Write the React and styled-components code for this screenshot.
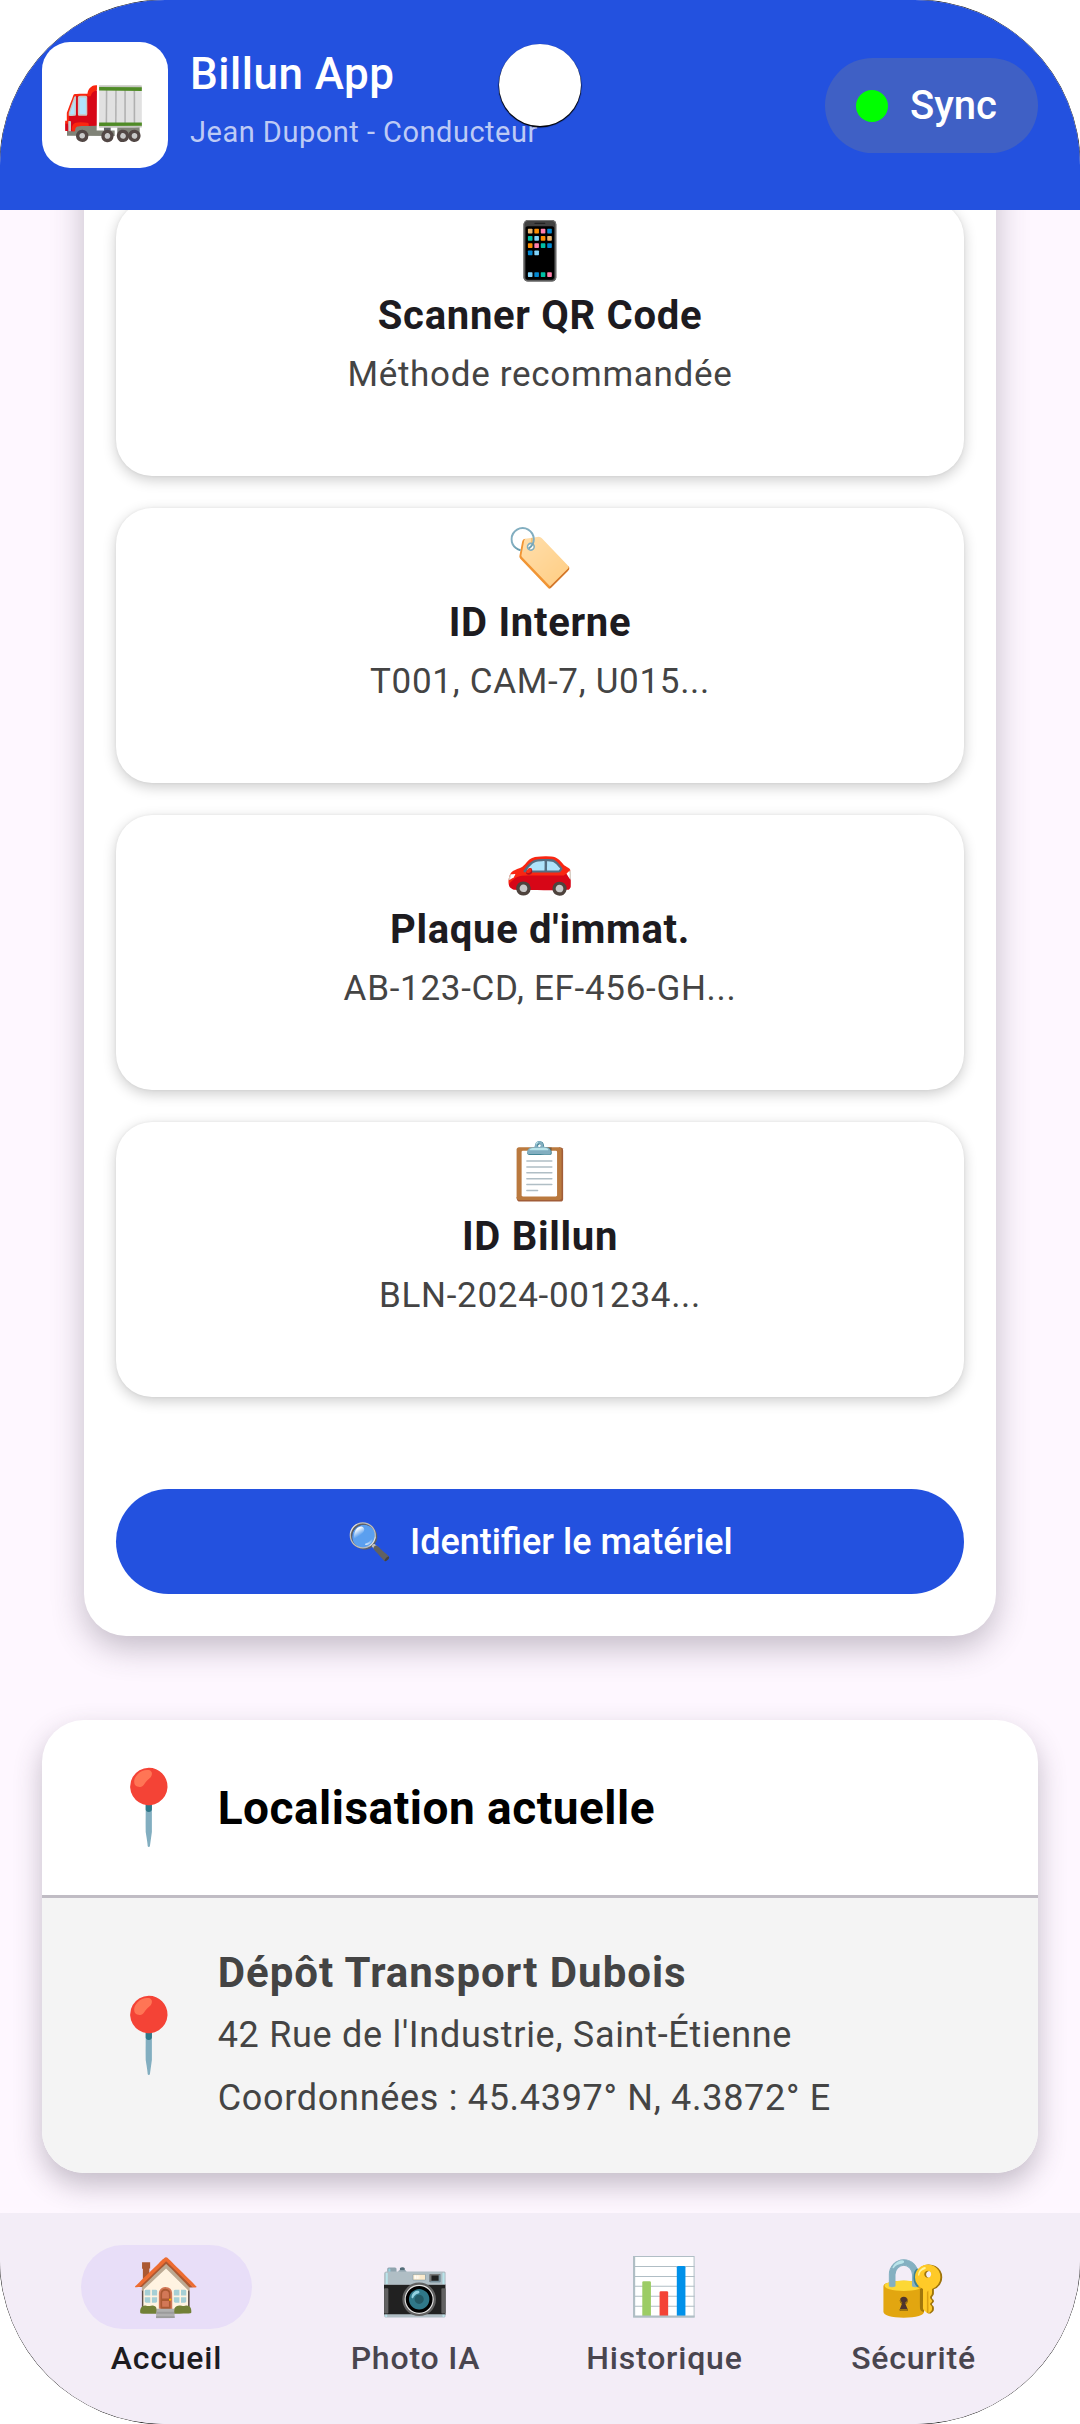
import React from "react";
import styled, { createGlobalStyle } from "styled-components";

const Global = createGlobalStyle`
  html, body { margin: 0; padding: 0; background: #fff; }
  * { box-sizing: border-box; }
  body { font-family: Roboto, "Noto Sans", sans-serif; }
`;
const Screen = styled.div`
  width: 1080px; height: 2424px; border-radius: 165px; overflow: hidden;
  background: #fef7ff; display: flex; flex-direction: column; position: relative;
  box-shadow: 0 0 0 0.5px #000;
`;
const Header = styled.header`
  height: 210px; flex: none; background: #2351df; display: flex; align-items: flex-start;
  padding: 42px 42px 0; position: relative; z-index: 2;
`;
const Logo = styled.div`
  width: 126px; height: 126px; border-radius: 28px; background: #fff; display: flex;
  align-items: center; justify-content: center; flex: none;
`;
const Emoji = styled.span`
  font-family: "Noto Color Emoji", sans-serif; font-size: ${p => p.$size}px; line-height: 1; display: block; flex: none;
`;
const HeaderText = styled.div`
  margin-left: 22px; display: flex; flex-direction: column; flex: 1;
`;
const AppTitle = styled.div`
  color: #fff; font-size: 44px; font-weight: 500; line-height: 60px; margin-top: 2px; letter-spacing: .5px;
`;
const AppSub = styled.div`
  color: #bdcaf5; font-size: 29px; line-height: 40px; margin-top: 8px; letter-spacing: .5px;
`;
const Sync = styled.div`
  width: 213px; height: 95px; border-radius: 48px; background: #3f60c5; display: flex; align-items: center;
  padding-left: 31px; gap: 22px; color: #fff; font-size: 40px; font-weight: 500; margin-top: 16px; flex: none;
`;
const Dot = styled.span`
  width: 32px; height: 32px; border-radius: 50%; background: #00ff00;
`;
const Cutout = styled.div`
  position: absolute; left: 499px; top: 44px; width: 82px; height: 82px; border-radius: 50%; background: #fff;
  box-shadow: 0 1px 1px 0.5px #000; z-index: 3;
`;
const Main = styled.main`
  flex: 1; min-height: 0; overflow: hidden;
`;
const Scroll = styled.div`
  margin-top: -300px; display: flex; flex-direction: column; align-items: center;
`;
const Panel = styled.section`
  width: 912px; background: #fff; border-radius: 42px; padding: 291px 32px 42px;
  box-shadow: 0 12px 32px rgba(60, 50, 70, .3); display: flex; flex-direction: column;
`;
const Methods = styled.div`
  display: flex; flex-direction: column; gap: 32px;
`;
const Method = styled.div`
  height: 275px; background: #fff; border-radius: 36px; box-shadow: 0 4px 14px rgba(0,0,0,.2), 0 0 3px rgba(0,0,0,.06);
  display: flex; flex-direction: column; align-items: center; padding-top: 22px;
`;
const MethodTitle = styled.div`
  font-size: 40px; font-weight: 700; color: #1d1b20; line-height: 50px; margin-top: 12px; letter-spacing: .7px;
`;
const MethodSub = styled.div`
  font-size: 35px; color: #444; line-height: 44px; margin-top: 12px; letter-spacing: .7px;
`;
const Cta = styled.button`
  height: 105px; border: 0; border-radius: 53px; background: #2351df; color: #fff; font-family: Roboto, sans-serif;
  font-size: 36px; font-weight: 500; display: flex; align-items: center; justify-content: center; gap: 18px; margin-top: 92px;
`;
const Location = styled.section`
  width: 996px; margin-top: 84px; height: 453px; border-radius: 42px; overflow: hidden; background: #fff;
  box-shadow: 0 12px 28px rgba(60, 50, 70, .3); display: flex; flex-direction: column;
`;
const LocWrap = styled.div`
  align-self: center;
`;
const LocHead = styled.div`
  height: 178px; display: flex; align-items: center; padding-left: 62px; gap: 24px; border-bottom: 3px solid #c0bcc4; flex: none;
`;
const LocTitle = styled.h2`
  margin: 0; font-size: 46px; font-weight: 700; color: #000; letter-spacing: .5px;
`;
const LocBody = styled.div`
  flex: 1; background: #f4f4f4; display: flex; align-items: center; padding-left: 62px; gap: 24px;
`;
const LocText = styled.div`
  display: flex; flex-direction: column; color: #444; font-size: 36px; line-height: 63px; letter-spacing: .7px;
`;
const LocName = styled.div`
  font-size: 42px; font-weight: 700; letter-spacing: 1px;
`;
const Nav = styled.nav`
  height: 211px; flex: none; background: #f3edf7; display: grid; grid-template-columns: repeat(4, 1fr); padding: 32px 42px 0 42px; column-gap: 0;
`;
const NavItem = styled.div`
  display: flex; flex-direction: column; align-items: center;
  font-size: 32px; font-weight: 500; color: ${p => p.$active ? "#1d1b20" : "#49454f"}; letter-spacing: .8px;
`;
const Pill = styled.div`
  width: 171px; height: 84px; border-radius: 42px; background: ${p => p.$active ? "#e8def8" : "transparent"};
  display: flex; align-items: center; justify-content: center; margin-bottom: 10px;
`;

const methods = [
  ["📱", "Scanner QR Code", "Méthode recommandée"],
  ["🏷️", "ID Interne", "T001, CAM-7, U015..."],
  ["🚗", "Plaque d'immat.", "AB-123-CD, EF-456-GH..."],
  ["📋", "ID Billun", "BLN-2024-001234..."],
];
const nav = [["🏠", "Accueil", true], ["📷", "Photo IA"], ["📊", "Historique"], ["🔐", "Sécurité"]];

export default function App() {
  return (
    <Screen>
      <Global />
      <Header>
        <Logo><Emoji $size={68}>🚛</Emoji></Logo>
        <HeaderText>
          <AppTitle>Billun App</AppTitle>
          <AppSub>Jean Dupont - Conducteur</AppSub>
        </HeaderText>
        <Sync><Dot />Sync</Sync>
      </Header>
      <Cutout />
      <Main>
        <Scroll>
          <Panel>
            <Methods>
              {methods.map(([e, t, s]) => (
                <Method key={t}><Emoji $size={56}>{e}</Emoji><MethodTitle>{t}</MethodTitle><MethodSub>{s}</MethodSub></Method>
              ))}
            </Methods>
            <Cta><Emoji $size={36}>🔍</Emoji>Identifier le matériel</Cta>
          </Panel>
          <Location>
            <LocHead><Emoji $size={72}>📍</Emoji><LocTitle>Localisation actuelle</LocTitle></LocHead>
            <LocBody>
              <Emoji $size={72}>📍</Emoji>
              <LocText>
                <LocName>Dépôt Transport Dubois</LocName>
                <span>42 Rue de l'Industrie, Saint-Étienne</span>
                <span>Coordonnées : 45.4397° N, 4.3872° E</span>
              </LocText>
            </LocBody>
          </Location>
        </Scroll>
      </Main>
      <Nav>
        {nav.map(([e, t, a]) => (
          <NavItem key={t} $active={a}><Pill $active={a}><Emoji $size={56}>{e}</Emoji></Pill>{t}</NavItem>
        ))}
      </Nav>
    </Screen>
  );
}
